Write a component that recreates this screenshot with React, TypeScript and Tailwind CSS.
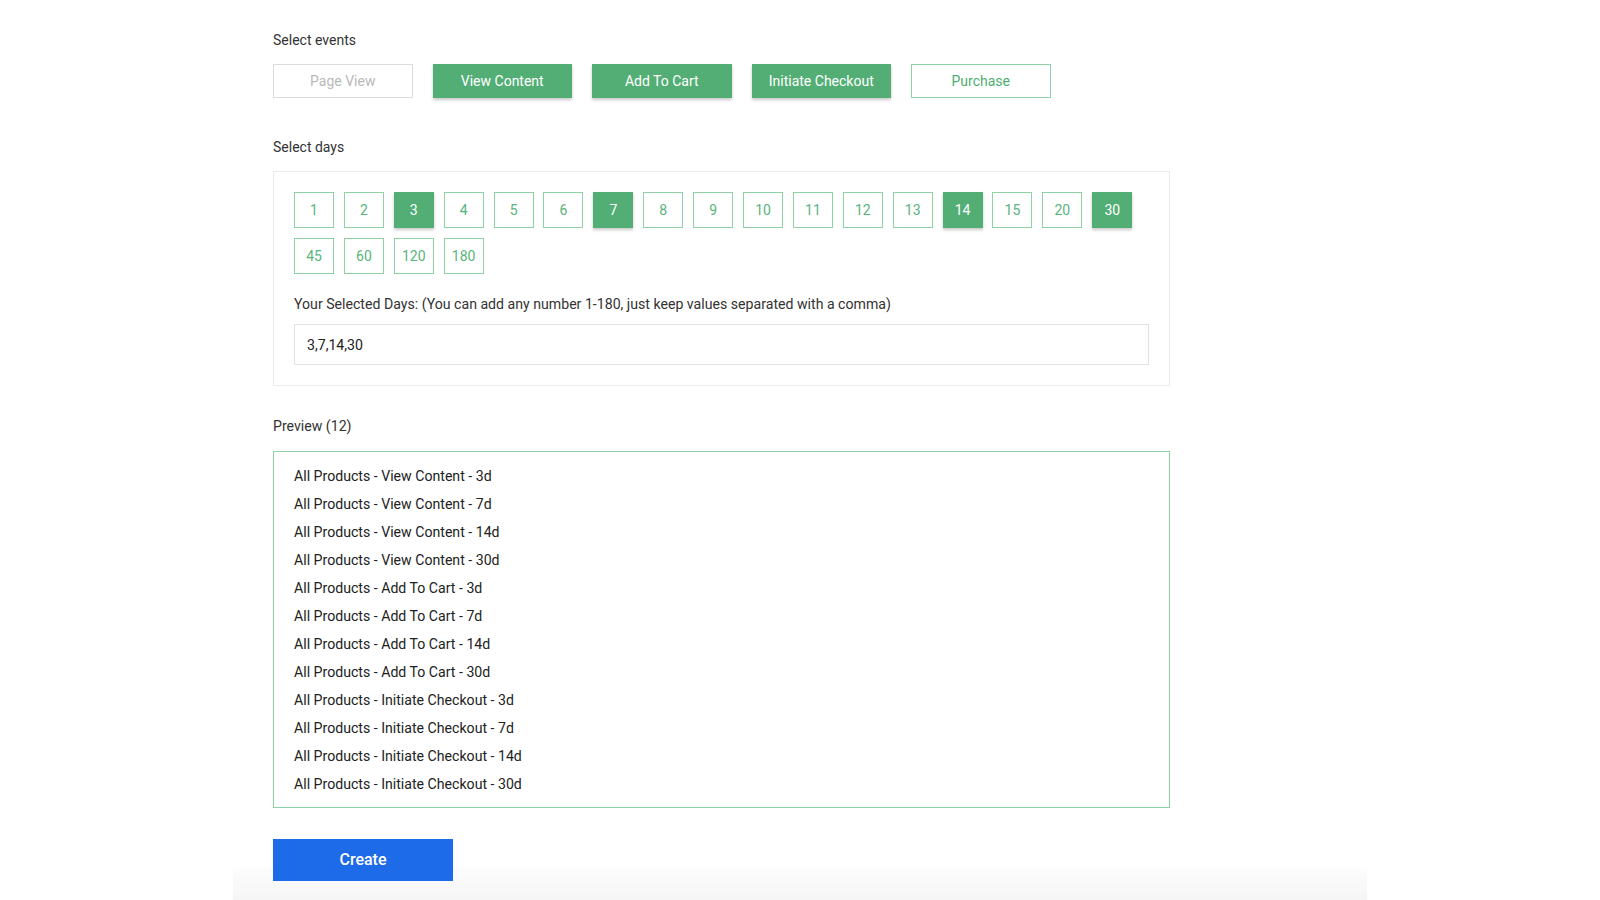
import { useState } from "react";

const EVENTS = ["Page View", "View Content", "Add To Cart", "Initiate Checkout", "Purchase"];
const DAYS = [1, 2, 3, 4, 5, 6, 7, 8, 9, 10, 11, 12, 13, 14, 15, 20, 30, 45, 60, 120, 180];

export default function App() {
  const [events] = useState<string[]>(["View Content", "Add To Cart", "Initiate Checkout"]);
  const [days, setDays] = useState<number[]>([3, 7, 14, 30]);

  const preview = events.flatMap((e) => days.map((d) => `All Products - ${e} - ${d}d`));

  function toggleDay(d: number) {
    setDays((cur) => (cur.includes(d) ? cur.filter((x) => x !== d) : [...cur, d].sort((a, b) => a - b)));
  }

  return (
    <div className="min-h-[900px] bg-white font-['Roboto','Liberation_Sans',sans-serif] text-[#333]">
      <div className="mx-auto w-[1134px] min-h-[900px] px-[40px] pt-[30px] bg-[linear-gradient(to_bottom,#ffffff_868px,#fcfcfc_868px,#f6f6f6_900px)]">
        <div className="w-[897px]">
          {/* events */}
          <div className="text-[14px] leading-5">Select events</div>
          <div className="mt-[14px] flex gap-[20px]">
            {EVENTS.map((e) => {
              const active = events.includes(e);
              const disabled = e === "Page View";
              return (
                <button
                  key={e}
                  className={
                    "h-[34px] w-[139.5px] text-[14px] " +
                    (disabled
                      ? "border-[1.5px] border-[#dcdcdc] text-[#b9b9b9]"
                      : active
                        ? "bg-[#53ae76] text-white shadow-[0_2px_3px_rgba(0,0,0,0.22)]"
                        : "border-[1.5px] border-[#8fd2a6] text-[#4fae72]")
                  }
                >
                  {e}
                </button>
              );
            })}
          </div>

          {/* days */}
          <div className="mt-[39px] text-[14px] leading-5">Select days</div>
          <div className="mt-[14px] border border-[#ebebeb] p-5">
            <div className="flex flex-wrap gap-x-[9.9px] gap-y-[10px]">
              {DAYS.map((d) => {
                const active = days.includes(d);
                return (
                  <button
                    key={d}
                    onClick={() => toggleDay(d)}
                    className={
                      "h-[36px] w-[40px] text-[14px] " +
                      (active
                        ? "bg-[#53ae76] text-white shadow-[0_2px_3px_rgba(0,0,0,0.22)]"
                        : "border-[1.5px] border-[#8fd2a6] text-[#58b47b]")
                    }
                  >
                    {d}
                  </button>
                );
              })}
            </div>
            <div className="mt-5 text-[14.13px] leading-5">
              Your Selected Days: (You can add any number 1-180, just keep values separated with a comma)
            </div>
            <input
              className="mt-[10px] block h-[41px] w-full border border-[#e2e2e2] px-3 text-[14.13px] text-[#222] outline-none"
              value={days.join(",")}
              readOnly
            />
          </div>

          {/* preview */}
          <div className="mt-[30px] text-[14.13px] leading-5">Preview ({preview.length})</div>
          <div className="mt-[15px] border-[1.5px] border-[#8fd2a6] px-5 pt-[10px] pb-[9px]">
            {preview.map((p) => (
              <div key={p} className="h-[28px] text-[14.13px] leading-[28px] text-[#222]">
                {p}
              </div>
            ))}
          </div>

          <button className="mt-[31px] h-[42px] w-[180px] bg-[#1e6be9] text-[16px] font-medium text-white">
            Create
          </button>
        </div>
      </div>
    </div>
  );
}
